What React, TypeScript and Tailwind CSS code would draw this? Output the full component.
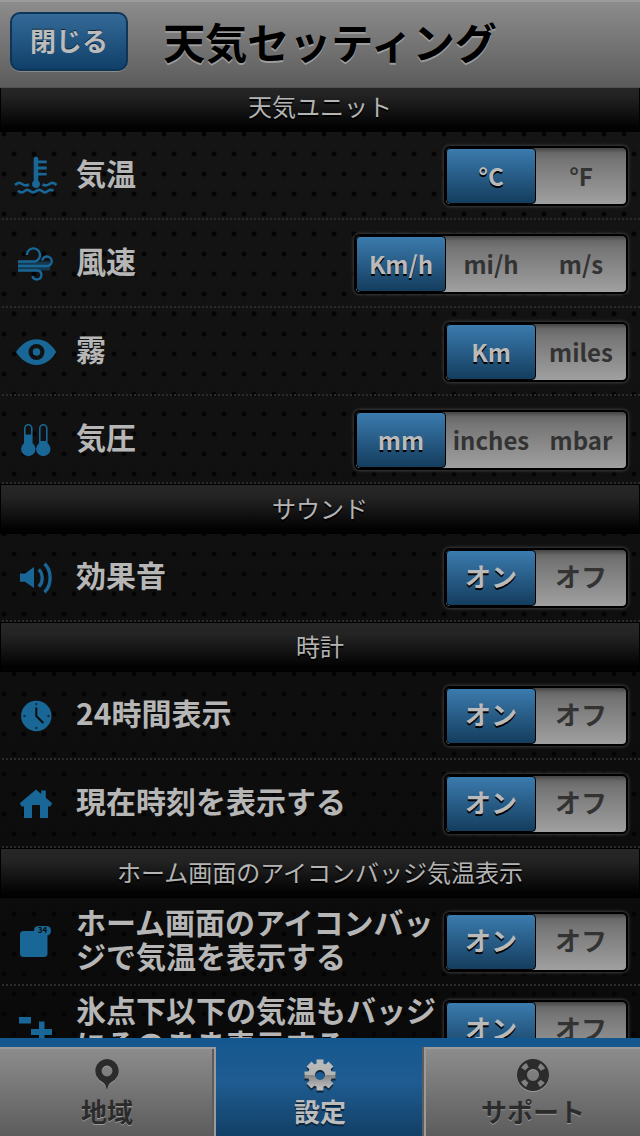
import React, { useState } from "react";

type IconProps = { children: React.ReactNode };

function RowIcon({ children }: IconProps) {
  return (
    <svg
      viewBox="0 0 48 48"
      className="size-12 shrink-0 text-[#186796]"
      fill="currentColor"
      aria-hidden="true"
    >
      {children}
    </svg>
  );
}

const TemperatureIcon = () => (
  <RowIcon>
    <path d="M21.700 7a2.300 2.300 0 0 1 4.600 0v1.400h8.400v2.800h-8.400v3.400h8.400v2.800h-8.400v3.400h8.400v2.800h-8.400v5.200a4 4 0 1 1-4.600 0z" />
    <g fill="none" stroke="currentColor" strokeWidth="2.600">
      <path d="M3 33c2.500-2.600 5-2.600 7.500-.8s4 1.600 6.500 .3M44.500 33c-2.500-2.600-5-2.600-7.500-.8s-4 1.600-6.500 .3" />
      <path d="M6 38.800c2.400 2 4.600 2 6.500 .3s3.600-1.700 5.600 0 4 1.700 6 0 4-1.700 6 0 3.700 1.700 5.500 0 3.400-1.700 5.900-.4" />
    </g>
  </RowIcon>
);

const WindIcon = () => (
  <RowIcon>
    <path opacity=".45" d="M6 21.500h32v9H6z" />
    <g fill="none" stroke="currentColor" strokeWidth="2.400">
      <path d="M6 21.500h16.500a6.600 6.600 0 1 0-7.700-6.500" />
      <path d="M6 26h30a4.800 4.800 0 1 0-5.800-5.400" />
      <path d="M6 30.500h19.500a4.500 4.500 0 1 1-5 5.500" />
    </g>
  </RowIcon>
);

const EyeIcon = () => (
  <RowIcon>
    <path
      fillRule="evenodd"
      d="M4 24C9 16.500 16 11.200 24.500 11.200S40 16.500 44.200 24C40 31.500 33 37 24.500 37S9 31.500 4 24zM24.500 16a8 8 0 1 0 0 16 8 8 0 0 0 0-16z"
    />
    <circle cx="24.500" cy="24" r="3.800" />
  </RowIcon>
);

const PressureIcon = () => (
  <RowIcon>
    {[16.300, 31.300].map((x, i) => (
      <g key={x}>
        <circle cx={x} cy="33" r="7.200" />
        <rect
          x={x - 3.500}
          y="8.800"
          width="7"
          height="24"
          rx="3.500"
          fill="none"
          stroke="currentColor"
          strokeWidth="1.600"
        />
        <rect x={x - 3.500} y={i === 0 ? 18.500 : 25} width="7" height="10" />
      </g>
    ))}
  </RowIcon>
);

const SpeakerIcon = () => (
  <RowIcon>
    <path d="M8 19.500h5l9-6.500v21l-9-6.200H8z" />
    <g fill="none" stroke="currentColor" strokeWidth="3.400">
      <path d="M26.800 15.500c4.500 4 4.500 13 0 17" />
      <path d="M32.500 9.800c7.500 6.500 7.500 21.500 0 28.400" />
    </g>
  </RowIcon>
);

const ClockIcon = () => (
  <RowIcon>
    <circle cx="24.300" cy="24" r="15.200" />
    <g fill="none" stroke="#0c0c0c">
      <path strokeWidth="2" d="M24.300 15.500V24l7 7" />
      <path strokeWidth="1.800" d="M24.300 11v2M24.300 35v2M11.500 24h2M35.500 24h2" opacity=".7" />
    </g>
  </RowIcon>
);

const HomeIcon = () => (
  <RowIcon>
    <path d="M24 9.500 29.200 14V10.500h4.600V17.700L40.200 23.200 38.300 26.500H36V38H28V25h-8v13h-8V26.500H9.700L7.800 23.200z" />
  </RowIcon>
);

const BadgeIcon = () => (
  <RowIcon>
    <rect x="8" y="13" width="27.500" height="26" rx="3.500" />
    <rect x="22" y="8" width="17" height="9.500" rx="4.500" />
    <text x="30.500" y="15.400" textAnchor="middle" className="text-[8px] font-bold" fill="#0b0b0b">
      34
    </text>
  </RowIcon>
);

const PlusMinusIcon = () => (
  <RowIcon>
    <path d="M7 11h12v6.500H7zM27 15.500h5.500v7.500H40v6h-7.500v8H27v-8h-8v-6h8z" />
  </RowIcon>
);

type Setting = { id: string; label: string; icon: React.ReactNode; options: string[] };
type Section = { title: string; settings: Setting[] };

const ON_OFF = ["オン", "オフ"];

const SECTIONS: Section[] = [
  {
    title: "天気ユニット",
    settings: [
      { id: "temperature", label: "気温", icon: <TemperatureIcon />, options: ["°C", "°F"] },
      { id: "wind", label: "風速", icon: <WindIcon />, options: ["Km/h", "mi/h", "m/s"] },
      { id: "fog", label: "霧", icon: <EyeIcon />, options: ["Km", "miles"] },
      { id: "pressure", label: "気圧", icon: <PressureIcon />, options: ["mm", "inches", "mbar"] },
    ],
  },
  {
    title: "サウンド",
    settings: [{ id: "effects", label: "効果音", icon: <SpeakerIcon />, options: ON_OFF }],
  },
  {
    title: "時計",
    settings: [
      { id: "clock24", label: "24時間表示", icon: <ClockIcon />, options: ON_OFF },
      { id: "localtime", label: "現在時刻を表示する", icon: <HomeIcon />, options: ON_OFF },
    ],
  },
  {
    title: "ホーム画面のアイコンバッジ気温表示",
    settings: [
      { id: "badge", label: "ホーム画面のアイコンバッジで気温を表示する", icon: <BadgeIcon />, options: ON_OFF },
      { id: "subzero", label: "氷点下以下の気温もバッジにそのまま表示する", icon: <PlusMinusIcon />, options: ON_OFF },
    ],
  },
];

function Segmented({ id, options }: { id: string; options: string[] }) {
  const [value, setValue] = useState(options[0]);
  const textSize = options === ON_OFF ? "text-[26px] pb-1.5" : "text-2xl";
  return (
    <div
      role="radiogroup"
      aria-labelledby={`${id}-label`}
      className="flex shrink-0 overflow-hidden rounded-md border-2 border-black bg-[linear-gradient(#444,#686868_5px,#757575_12px,#a0a0a0)] shadow-[0_0_3px_1px_#3c3c3c]"
    >
      {options.map((option) => (
        <label key={option} className="relative block w-[90px] cursor-pointer">
          <input
            type="radio"
            name={id}
            value={option}
            checked={value === option}
            onChange={() => setValue(option)}
            className="peer sr-only"
          />
          <span
            className={`flex h-14 items-center justify-center border border-transparent font-bold text-[#333] peer-checked:rounded-sm peer-checked:border-black peer-checked:bg-[linear-gradient(#3b7bae,#143d5e)] peer-checked:text-[#bababa] peer-checked:text-shadow-[0_2px_0_#000] ${textSize}`}
          >
            {option}
          </span>
        </label>
      ))}
    </div>
  );
}

function SettingRow({ setting }: { setting: Setting }) {
  return (
    <div className="flex h-[88px] items-center bg-[repeating-linear-gradient(90deg,transparent_0_2px,#2b2b2b_2px_4px)] bg-[length:100%_2px] bg-bottom bg-no-repeat px-3">
      {setting.icon}
      <div
        id={`${setting.id}-label`}
        className="ml-4 min-w-0 flex-1 pb-2 text-[30px] leading-[34px] font-bold text-[#b6b6b6]"
      >
        {setting.label}
      </div>
      <Segmented id={setting.id} options={setting.options} />
    </div>
  );
}

const PinIcon = () => (
  <svg viewBox="0 0 36 36" className="size-9 drop-shadow-[0_1px_0_#999]" fill="#2b2b2b" aria-hidden="true">
    <path fillRule="evenodd" d="M18 2a12 12 0 0 1 4.500 23c-2.500 1.300-3.600 4-4.500 8.500-.9-4.500-2-7.200-4.500-8.500A12 12 0 0 1 18 2zm0 6.600a5.400 5.400 0 1 0 0 10.800 5.400 5.400 0 0 0 0-10.800z" />
  </svg>
);

const GearIcon = () => (
  <svg viewBox="0 0 36 36" className="size-9 drop-shadow-[0_2px_0_#0b2439]" aria-hidden="true">
    <defs>
      <linearGradient id="gear" x1="0" y1="0" x2="0" y2="1">
        <stop offset="0" stopColor="#bcbcbc" />
        <stop offset=".5" stopColor="#b4b4b4" />
        <stop offset=".5" stopColor="#858585" />
        <stop offset=".85" stopColor="#bcbcbc" />
      </linearGradient>
      <mask id="gear-shape">
        <circle cx="18" cy="18" r="12" fill="#fff" />
        {[0, 45, 90, 135].map((angle) => (
          <rect
            key={angle}
            x="14.500"
            y="2.500"
            width="7"
            height="31"
            fill="#fff"
            transform={`rotate(${angle} 18 18)`}
          />
        ))}
        <circle cx="18" cy="18" r="5" fill="#000" />
      </mask>
    </defs>
    <rect width="36" height="36" fill="url(#gear)" mask="url(#gear-shape)" />
  </svg>
);

const LifebuoyIcon = () => (
  <svg viewBox="0 0 36 36" className="size-9 drop-shadow-[0_1px_0_#999]" aria-hidden="true">
    <circle cx="18" cy="18" r="11" fill="none" stroke="#2b2b2b" strokeWidth="10" />
    <circle
      cx="18"
      cy="18"
      r="11.300"
      fill="none"
      stroke="#808080"
      strokeWidth="5"
      strokeDasharray="6 11.750"
      strokeDashoffset="3"
      transform="rotate(45 18 18)"
    />
  </svg>
);

type Tab = { label: string; icon: React.ReactNode };

const TABS: Tab[] = [
  { label: "地域", icon: <PinIcon /> },
  { label: "設定", icon: <GearIcon /> },
  { label: "サポート", icon: <LifebuoyIcon /> },
];

function TabBar() {
  return (
    <nav className="relative z-10 grid shrink-0 grid-cols-[27fr_26fr_27fr] bg-[linear-gradient(#14578f,#1f5c91_45%,#113f66)] pt-[9px]">
      {TABS.map((tab, i) => {
        const active = i === 1;
        const edge = i === 0 ? "border-r-2 shadow-[inset_-2px_0_0_#5c5c5c]" : "border-l-2 shadow-[-2px_0_0_#5c5c5c]";
        return (
          <button
            key={tab.label}
            type="button"
            aria-current={active ? "page" : undefined}
            className={
              active
                ? "flex h-[89px] flex-col items-center pt-2.5 text-[26px] leading-9 font-bold text-[#bcbcbc] text-shadow-[0_2px_0_#0b2439]"
                : `flex h-[89px] flex-col items-center border-t-2 border-[#9a9a9a] bg-[linear-gradient(#8c8c8c,#5c5c5c)] pt-2 text-[26px] leading-9 font-bold text-[#2b2b2b] text-shadow-[0_1px_0_#999] ${edge}`
            }
          >
            {tab.icon}
            <span>{tab.label}</span>
          </button>
        );
      })}
    </nav>
  );
}

export default function App() {
  return (
    <div
      lang="ja"
      className="flex h-screen flex-col overflow-hidden bg-[radial-gradient(circle_at_4px_14px,#040404_2px,transparent_3px),radial-gradient(circle_at_14px_34px,#040404_2px,transparent_3px),linear-gradient(#161616,#090909)] bg-[length:20px_40px,20px_40px,100%_100%] font-['Noto_Sans_CJK_JP',sans-serif]"
    >
      <header className="relative z-10 grid h-[88px] shrink-0 grid-cols-[1fr_auto_1fr] items-center border-t-2 border-b border-t-[#9c9c9c] border-b-[#505050] bg-[linear-gradient(#8c8c8c,#5c5c5c)] px-2.5">
        <button
          type="button"
          className="mb-1.5 h-[59px] w-[118px] rounded-[10px] border-2 border-[#0d3558] bg-[linear-gradient(#346a98,#104069)] pb-1 text-[26px] font-bold text-[#bcbcbc] shadow-[0_1px_0_#8a8a8a] text-shadow-[0_-1px_0_#0b2439]"
        >
          閉じる
        </button>
        <h1 className="pb-2 pl-5 text-[42px] leading-[60px] font-bold text-black text-shadow-[0_2px_0_#9c9c9c]">
          天気セッティング
        </h1>
      </header>
      <main className="-mt-1.5 min-h-0 flex-1 overflow-y-auto [scrollbar-width:none]">
        {SECTIONS.map((section) => (
          <section key={section.title}>
            <h2 className="flex h-[50px] items-center justify-center border border-black bg-[linear-gradient(#272727,#232323_25%,#020202_92%)] pb-0.5 text-2xl font-normal text-[#b4b4b4] text-shadow-[0_2px_0_#000]">
              {section.title}
            </h2>
            {section.settings.map((setting) => (
              <SettingRow key={setting.id} setting={setting} />
            ))}
          </section>
        ))}
      </main>
      <TabBar />
    </div>
  );
}
